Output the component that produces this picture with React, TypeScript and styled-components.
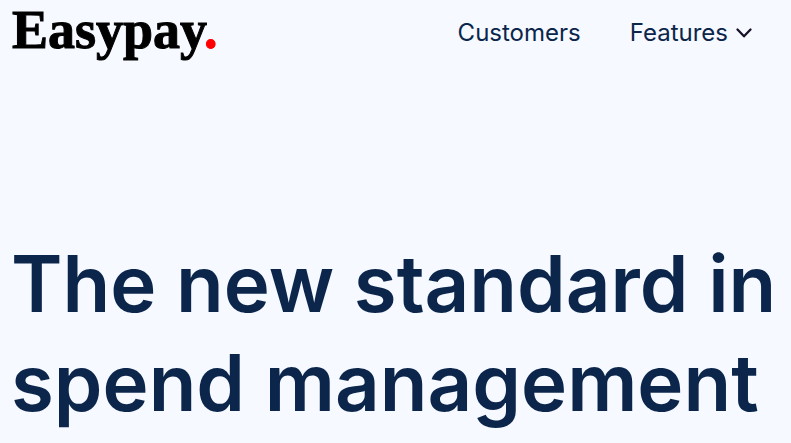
import React from "react";
import styled, { createGlobalStyle } from "styled-components";

const GlobalStyle = createGlobalStyle`
  *, *::before, *::after { box-sizing: border-box; }
  body {
    margin: 0;
    background: #f6f9ff;
    color: #0b254b;
    font-family: Inter, "Liberation Sans", sans-serif;
  }
`;

const Header = styled.header`
  display: flex;
  align-items: flex-start;
  justify-content: space-between;
  min-height: 64px;
  padding: 0 12px;
`;

const Logo = styled.a`
  color: #000;
  font-family: "Liberation Serif", serif;
  font-size: 54px;
  line-height: 60px;
  font-weight: 700;
  text-decoration: none;
  -webkit-text-stroke: 1px currentColor;
`;

const Dot = styled.span`
  color: #fe0000;
`;

const Nav = styled.nav`
  display: flex;
  align-items: center;
  gap: 49px;
  padding: 17px 27px 0 0;
`;

const NavLink = styled.a`
  color: inherit;
  font-size: 24px;
  line-height: 32px;
  text-decoration: none;
`;

const NavButton = styled.button`
  display: flex;
  align-items: center;
  gap: 8px;
  padding: 0;
  border: 0;
  background: none;
  color: inherit;
  font: inherit;
  font-size: 24px;
  line-height: 32px;
  cursor: pointer;
`;

const Chevron = styled.svg`
  width: 16px;
  height: 10px;
  fill: none;
  stroke: #17122a;
  stroke-width: 2.3;
  stroke-linecap: round;
  stroke-linejoin: round;
`;

const Hero = styled.main`
  padding: 170px 4px 0 11px;
`;

const Title = styled.h1`
  margin: 0;
  font-size: 78px;
  line-height: 99px;
  font-weight: 600;
`;

export default function App() {
  return (
    <>
      <GlobalStyle />
      <Header>
        <Logo href="#">
          Easypay<Dot>.</Dot>
        </Logo>
        <Nav>
          <NavLink href="#customers">Customers</NavLink>
          <NavButton type="button">
            Features
            <Chevron viewBox="0 0 16 10" aria-hidden="true">
              <path d="M1.5 1.5 8 8.3 14.5 1.5" />
            </Chevron>
          </NavButton>
        </Nav>
      </Header>
      <Hero>
        <Title>The new standard in spend management</Title>
      </Hero>
    </>
  );
}
